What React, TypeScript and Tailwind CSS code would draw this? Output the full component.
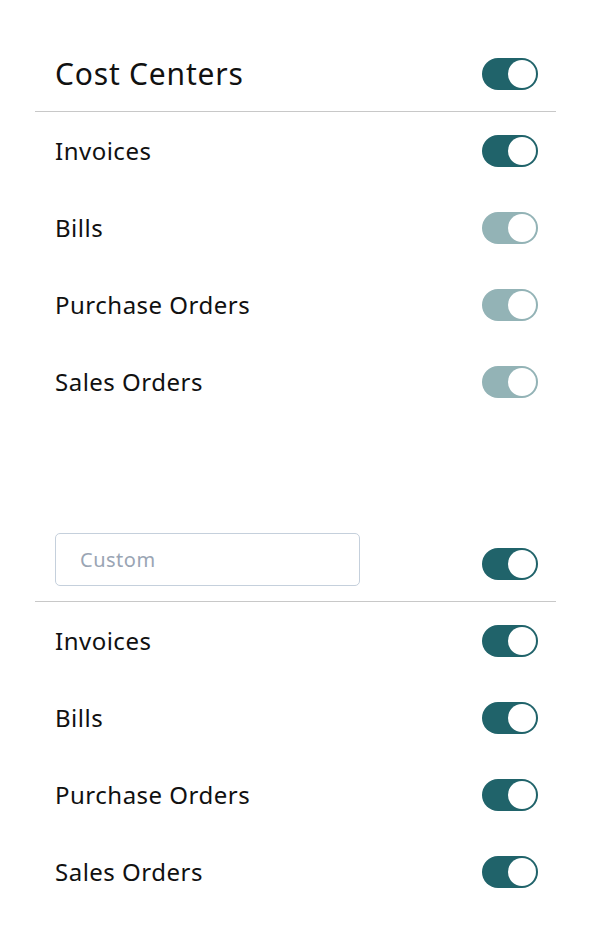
import { useState } from "react";

function Toggle({ on = true, muted = false }: { on?: boolean; muted?: boolean }) {
  const [checked, setChecked] = useState(on);
  return (
    <button
      type="button"
      onClick={() => setChecked(!checked)}
      className={
        "relative h-8 w-14 shrink-0 rounded-full p-[2px] flex items-center " +
        (muted ? "bg-[#93b3b6]" : "bg-[#20636a]") +
        (checked ? " justify-end" : " justify-start")
      }
    >
      <span className="block h-7 w-7 rounded-full bg-white" />
    </button>
  );
}

const items = ["Invoices", "Bills", "Purchase Orders", "Sales Orders"];

function Row({ label, muted }: { label: string; muted?: boolean }) {
  return (
    <div className="flex h-[77px] items-center justify-between pl-5 pr-[18px]">
      <span className="text-[24px] tracking-[0.5px] text-[#111]">{label}</span>
      <Toggle muted={muted} />
    </div>
  );
}

export default function App() {
  return (
    <div
      className="min-h-[948px] bg-white pt-9 pl-[35px] pr-[38px]"
      style={{ fontFamily: "'Noto Sans', sans-serif" }}
    >
      {/* Cost centers */}
      <div className="flex h-[75px] items-center justify-between pl-5 pr-[18px]">
        <h1 className="text-[30px] tracking-[0.8px] text-[#111]">Cost Centers</h1>
        <Toggle />
      </div>
      <div className="h-px bg-[#c8c8c8]" />
      {items.map((label, i) => (
        <Row key={label} label={label} muted={i > 0} />
      ))}

      <div className="h-[106px]" />

      {/* Custom */}
      <div className="flex h-[75px] items-center justify-between pl-5 pr-[18px]">
        <input
          placeholder="Custom"
          className="-mt-2 h-[53px] w-[305px] rounded-[5px] border border-[#c5d0dc] px-6 text-[20px] tracking-[0.5px] text-[#111] placeholder:text-[#9aa5b4] outline-none"
        />
        <Toggle />
      </div>
      <div className="h-px bg-[#c8c8c8]" />
      {items.map((label) => (
        <Row key={label} label={label} />
      ))}
    </div>
  );
}
